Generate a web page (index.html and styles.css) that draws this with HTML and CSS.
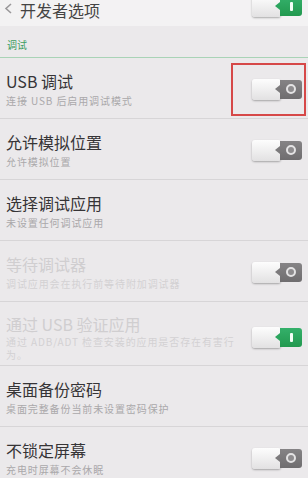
FILE: index.html
```html
<!DOCTYPE html>
<html lang="zh-CN">
<head>
    <meta charset="UTF-8">
    <meta name="viewport" content="width=device-width, initial-scale=1.0">
    <title>开发者选项</title>
    <link rel="stylesheet" href="styles.css">
</head>
<body>
    <div class="header">
        <svg class="back" width="10" height="14" viewBox="0 0 10 14">
            <polyline points="8,3 3,7.5 8,12" fill="none" stroke="#9a989a" stroke-width="1.6"/>
        </svg>
        <span class="header-title">开发者选项</span>
        <div class="switch switch-top">
            <div class="switch-base"></div>
            <div class="switch-tab on"><span class="bar"></span></div>
        </div>
    </div>

    <div class="section">调试</div>

    <div class="row marked">
        <div class="row-text">
            <div class="title">USB 调试</div>
            <div class="sub">连接 USB 后启用调试模式</div>
        </div>
        <div class="switch">
            <div class="switch-base"></div>
            <div class="switch-tab"><span class="ring"></span></div>
        </div>
        <div class="mark"></div>
    </div>

    <div class="row">
        <div class="row-text">
            <div class="title">允许模拟位置</div>
            <div class="sub">允许模拟位置</div>
        </div>
        <div class="switch">
            <div class="switch-base"></div>
            <div class="switch-tab"><span class="ring"></span></div>
        </div>
    </div>

    <div class="row">
        <div class="row-text">
            <div class="title">选择调试应用</div>
            <div class="sub">未设置任何调试应用</div>
        </div>
    </div>

    <div class="row disabled">
        <div class="row-text">
            <div class="title">等待调试器</div>
            <div class="sub">调试应用会在执行前等待附加调试器</div>
        </div>
        <div class="switch">
            <div class="switch-base"></div>
            <div class="switch-tab"><span class="ring"></span></div>
        </div>
    </div>

    <div class="row disabled row-tall">
        <div class="row-text">
            <div class="title">通过 USB 验证应用</div>
            <div class="sub">通过 ADB/ADT 检查安装的应用是否存在有害行为。</div>
        </div>
        <div class="switch">
            <div class="switch-base"></div>
            <div class="switch-tab on"><span class="bar"></span></div>
        </div>
    </div>

    <div class="row">
        <div class="row-text">
            <div class="title">桌面备份密码</div>
            <div class="sub">桌面完整备份当前未设置密码保护</div>
        </div>
    </div>

    <div class="row">
        <div class="row-text">
            <div class="title">不锁定屏幕</div>
            <div class="sub">充电时屏幕不会休眠</div>
        </div>
        <div class="switch">
            <div class="switch-base"></div>
            <div class="switch-tab"><span class="ring"></span></div>
        </div>
    </div>
</body>
</html>
```

FILE: styles.css
```css
body {
    margin: 0;
    padding: 0;
    width: 308px;
    height: 478px;
    overflow: hidden;
    background-color: #ebe9eb;
    font-family: "Noto Sans CJK SC", "Noto Sans", sans-serif;
}
.header {
    display: flex;
    align-items: flex-start;
    height: 26px;
    padding: 0 6px 0 3px;
    background-color: #f3f2f3;
}
.back {
    margin-top: 1px;
    margin-right: 7px;
}
.header-title {
    flex: 1;
    font-size: 16px;
    line-height: 20px;
    color: #444;
}
.switch-top {
    margin-top: -4px;
}
.section {
    padding: 12px 7px 6px;
    font-size: 10px;
    line-height: 13px;
    color: #3f9d60;
    border-bottom: 1px solid #a9d3b6;
}
.row {
    display: flex;
    align-items: center;
    padding: 13px 6px 11px 6px;
    border-bottom: 1px solid #d7d5d7;
}
.row-tall {
    padding-top: 12px;
    padding-bottom: 4px;
}
.row-text {
    flex: 1;
    min-width: 0;
}
.title {
    font-size: 16px;
    line-height: 20px;
    color: #363436;
}
.sub {
    margin-top: 3px;
    font-size: 10px;
    line-height: 13px;
    letter-spacing: 0.9px;
    color: #aaa8aa;
}
.row-tall .sub {
    margin-top: 1px;
    padding-right: 8px;
}
.disabled .title {
    color: #d0ced0;
}
.disabled .sub {
    color: #d3d1d3;
}
.switch {
    display: flex;
    align-items: center;
    flex-shrink: 0;
}
.switch-base {
    width: 29px;
    height: 21px;
    border-radius: 3px;
    background: linear-gradient(#fdfdfd, #e2e1e2);
    box-shadow: 0 1px 2px rgba(0, 0, 0, 0.3);
}
.switch-tab {
    position: relative;
    display: flex;
    align-items: center;
    justify-content: center;
    width: 22px;
    height: 19px;
    margin-left: -1px;
    border-radius: 0 3px 3px 0;
    background: linear-gradient(#858385, #6f6d6f);
}
.switch-tab::before {
    content: "";
    position: absolute;
    left: -5px;
    top: 5px;
    border-top: 4.5px solid transparent;
    border-bottom: 4.5px solid transparent;
    border-right: 5px solid #7c7a7c;
}
.switch-tab.on {
    background: linear-gradient(#34b06a, #22994f);
}
.switch-tab.on::before {
    border-right-color: #2ba55e;
}
.ring {
    width: 6px;
    height: 6px;
    border-radius: 50%;
    border: 2px solid #e4e3e4;
    background: #8e8c8e;
}
.bar {
    width: 3px;
    height: 9px;
    border-radius: 1px;
    background: #f4fff7;
}
.marked {
    position: relative;
}
.mark {
    position: absolute;
    top: 5px;
    right: 2px;
    width: 71px;
    height: 49px;
    border: 2px solid #d64848;
}
```
